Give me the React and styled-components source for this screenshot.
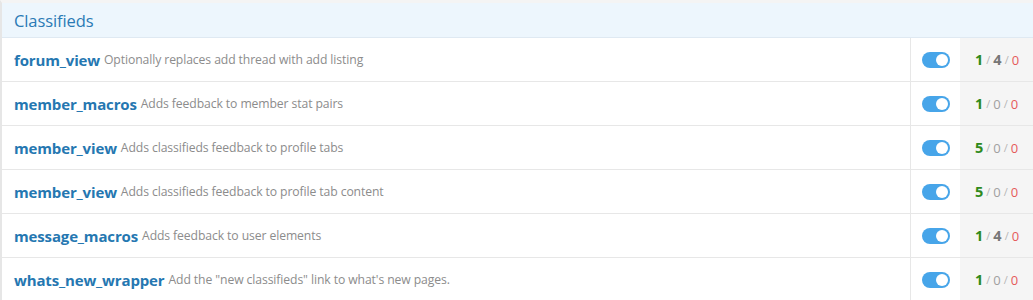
import React from 'react';
import styled, { createGlobalStyle } from 'styled-components';

const ROWS = [
    { name: 'forum_view', desc: 'Optionally replaces add thread with add listing', counts: [1, 4, 0] },
    { name: 'member_macros', desc: 'Adds feedback to member stat pairs', counts: [1, 0, 0] },
    { name: 'member_view', desc: 'Adds classifieds feedback to profile tabs', counts: [5, 0, 0] },
    { name: 'member_view', desc: 'Adds classifieds feedback to profile tab content', counts: [5, 0, 0] },
    { name: 'message_macros', desc: 'Adds feedback to user elements', counts: [1, 4, 0] },
    { name: 'whats_new_wrapper', desc: 'Add the "new classifieds" link to what\'s new pages.', counts: [1, 0, 0] }
];

export default () => (
    <>
        <GlobalStyle />
        <Block>
            <Header>Classifieds</Header>
            {ROWS.map((row, i) => (
                <Row key={i}>
                    <Main>
                        <Name>{row.name}</Name>
                        <Desc>{row.desc}</Desc>
                    </Main>
                    <ToggleCell>
                        <Toggle />
                    </ToggleCell>
                    <Counts>
                        <Count kind="ok" active>{row.counts[0]}</Count>
                        <Sep>/</Sep>
                        <Count kind="mid" active={row.counts[1] > 0}>{row.counts[1]}</Count>
                        <Sep>/</Sep>
                        <Count kind="err" active={row.counts[2] > 0}>{row.counts[2]}</Count>
                    </Counts>
                </Row>
            ))}
        </Block>
    </>
);

const GlobalStyle = createGlobalStyle`
    body {
        margin: 0;
        background: #fff;
        font-family: "Open Sans", "Noto Sans", sans-serif;
    }
`;

const Block = styled.div`
    border-left: 2px solid #e6e6e6;
    border-top: 3px solid #f4f4f4;
    width: 1033px;
    box-sizing: border-box;
`;

const Header = styled.h2`
    margin: 0;
    height: 34px;
    display: flex;
    align-items: center;
    padding: 0 12px;
    background: #edf6fd;
    color: #2a7ab5;
    font-size: 16.5px;
    font-weight: 400;
    letter-spacing: -0.1px;
    border-bottom: 1px solid #dfe9f2;
`;

const Row = styled.div`
    display: flex;
    height: 43px;
    border-bottom: 1px solid #e7e7e7;
`;

const Main = styled.div`
    flex: 1;
    display: flex;
    align-items: center;
    gap: 4px;
    padding-left: 12px;
    border-right: 1px solid #e7e7e7;
    white-space: nowrap;
`;

const Name = styled.span`
    color: #2577b1;
    font-weight: 700;
    font-size: 15px;
    letter-spacing: -0.15px;
`;

const Desc = styled.span`
    color: #8c8c8c;
    font-size: 12.2px;
    letter-spacing: -0.1px;
`;

const ToggleCell = styled.div`
    width: 49px;
    display: flex;
    align-items: center;
    justify-content: center;
`;

const Toggle = styled.span`
    position: relative;
    width: 28px;
    height: 16px;
    border-radius: 8px;
    background: #47a5e9;

    &::after {
        content: '';
        position: absolute;
        top: 2px;
        right: 2px;
        width: 12px;
        height: 12px;
        border-radius: 50%;
        background: #fff;
    }
`;

const Counts = styled.div`
    width: 73px;
    background: #f5f5f5;
    display: flex;
    align-items: center;
    padding-left: 15px;
    box-sizing: border-box;
    font-size: 13px;
`;

const COLORS = { ok: '#2f8a1c', mid: '#777', err: '#e55b5b' };

const Count = styled.span`
    color: ${p => (p.kind === 'err' ? COLORS.err : p.active ? COLORS[p.kind] : '#a0a0a0')};
    font-weight: ${p => (p.active && p.kind !== 'err' ? 700 : 400)};
    font-size: ${p => (p.active && p.kind !== 'err' ? '14.5px' : '13px')};
`;

const Sep = styled.span`
    color: #b5b5b5;
    margin: 0 3px;
    font-size: 11px;
`;
